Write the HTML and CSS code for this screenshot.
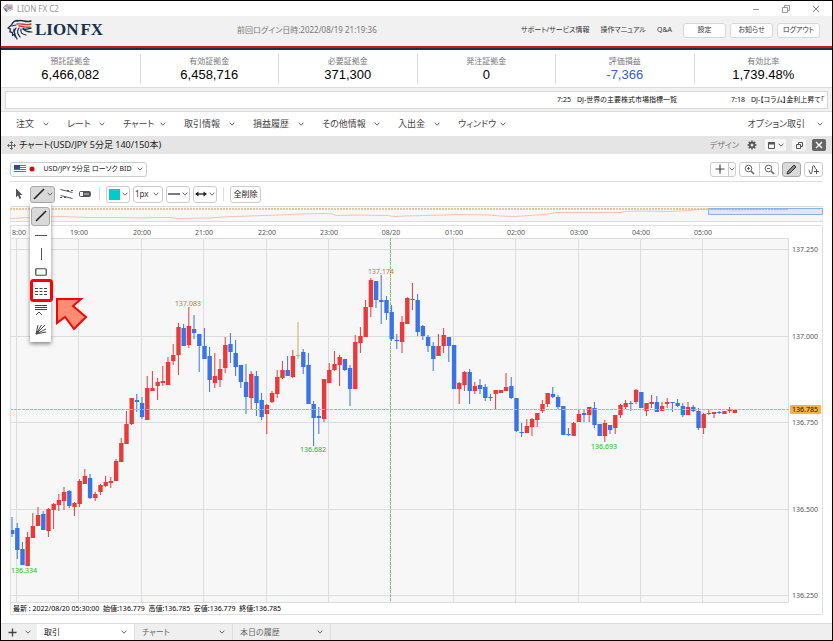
FILE: index.html
```html
<!DOCTYPE html>
<html lang="ja">
<head>
<meta charset="utf-8">
<title>LION FX C2</title>
<link rel="stylesheet" href="styles.css">
</head>
<body>
<svg class="defs" aria-hidden="true">
  <symbol id="chev" viewBox="0 0 6 4"><path d="M.7.7 3 3.2 5.3.7" fill="none" stroke="#666" stroke-width="1"/></symbol>
  <symbol id="lion" viewBox="0 0 26 22">
    <g fill="none" stroke="#16304d" stroke-linecap="round" stroke-linejoin="round">
      <path stroke-width="1.3" d="M11 1.500C7 1.500 5.500 3.500 4.500 6L1 9l2.500 1.200-.7 2.600 2.700.7v3l2-1.500.8 3"/>
      <path stroke-width="1.2" d="M5 7l4-1M9 9c-3 4-1 7 1 11M12 9c-3 4-1 6 1 9M14 10c-1 4 1 5 5 6M16 9c1 3 4 4 9 4M7 10c-1 2 0 3 1 5"/>
    </g>
    <g fill="none" stroke-linecap="round" stroke-width="1.400">
      <path stroke="#16304d" d="M10 2c6-2 8 2 14 0M16 10c3 1 5 0 8-1"/>
      <path stroke="#e3342f" d="M10 5c6-1 8 2 14 0M12 7c4 0 6 2 11 1"/>
    </g>
  </symbol>
</svg>

<div class="titlebar">
  <svg class="app-icon" viewBox="0 0 26 22"><use href="#lion"/></svg>
  <span>LION FX C2</span>
  <div class="window-buttons">
    <button aria-label="最小化"><svg width="8" height="8"><path d="M1 4.500h6" stroke="#999"/></svg></button>
    <button aria-label="元に戻す"><svg width="8" height="8" fill="none" stroke="#999"><path d="M.5 2.500h5v5h-5zM2.500 2.500v-2h5v5h-2"/></svg></button>
    <button aria-label="閉じる"><svg width="8" height="8"><path d="M1 1l6 6M7 1 1 7" stroke="#888"/></svg></button>
  </div>
</div>

<header class="header">
  <div class="brand"><svg class="lion" viewBox="0 0 26 22"><use href="#lion"/></svg><span>LION</span><span>FX</span></div>
  <div class="login">前回ログイン日時:2022/08/19 21:19:36</div>
  <nav class="links">
    <a href="#">サポート/サービス情報</a><a href="#">操作マニュアル</a><a href="#">Q&amp;A</a>
    <div class="header-buttons"><button>設定</button><button>お知らせ</button><button>ログアウト</button></div>
  </nav>
</header>

<dl class="stats">
  <div><dt>預託証拠金</dt><dd>6,466,082</dd></div>
  <div><dt>有効証拠金</dt><dd>6,458,716</dd></div>
  <div><dt>必要証拠金</dt><dd>371,300</dd></div>
  <div><dt>発注証拠金</dt><dd>0</dd></div>
  <div><dt>評価損益</dt><dd class="minus">-7,366</dd></div>
  <div><dt>有効比率</dt><dd>1,739.48%</dd></div>
</dl>

<div class="ticker"><div class="ticker-box"><div class="ticker-items">
  <span><time>7:25</time>DJ-世界の主要株式市場指標一覧</span>
  <span><time>7:18</time>DJ-【コラム】金利上昇て「</span>
</div></div></div>

<nav class="menu">
  <button>注文<svg class="chev"><use href="#chev"/></svg></button>
  <button>レート<svg class="chev"><use href="#chev"/></svg></button>
  <button>チャート<svg class="chev"><use href="#chev"/></svg></button>
  <button>取引情報<svg class="chev"><use href="#chev"/></svg></button>
  <button>損益履歴<svg class="chev"><use href="#chev"/></svg></button>
  <button>その他情報<svg class="chev"><use href="#chev"/></svg></button>
  <button>入出金<svg class="chev"><use href="#chev"/></svg></button>
  <button>ウィンドウ<svg class="chev"><use href="#chev"/></svg></button>
  <button class="option">オプション取引<svg class="chev"><use href="#chev"/></svg></button>
</nav>

<div class="panel-title">
  <svg width="9" height="9" fill="none" stroke="#666"><path d="M4.500 1v7M1 4.500h7M3 2l1.500-1.500L6 2M3 7l1.500 1.500L6 7M2 3 .5 4.500 2 6M7 3l1.500 1.500L7 6"/></svg>
  <h1>チャート(USD/JPY 5分足 140/150本)</h1>
  <div class="panel-tools">
    <span>デザイン</span>
    <button class="gear" aria-label="設定"><svg width="10" height="10" fill="none" stroke="#555"><circle cx="5" cy="5" r="2.400" stroke-width="1.800"/><path stroke-width="1.500" d="M5 .5v1.500M5 8v1.500M.5 5H2M8 5h1.500M1.800 1.800l1.100 1.100M7.100 7.100l1.100 1.100M8.200 1.800 7.100 2.900M2.900 7.100 1.800 8.200"/></svg></button>
    <button class="wide" aria-label="レイアウト"><svg width="7" height="7" fill="none" stroke="#555"><path d="M.5.5h6v6h-6z"/><path d="M0 1.500h7" stroke-width="2"/></svg><svg class="chev"><use href="#chev"/></svg></button>
    <button aria-label="切り離す"><svg width="7" height="7" fill="none" stroke="#555"><path d="M.5 2.500h4v4h-4zM2.500 2.500v-2h4v4h-2"/></svg></button>
    <button class="close" aria-label="閉じる"><svg width="8" height="8"><path d="M1 1l6 6M7 1 1 7" stroke="#fff" stroke-width="1.500"/></svg></button>
  </div>
</div>

<main class="workspace">
  <div class="toolbar symbol-bar">
    <button class="symbol">
      <svg width="24" height="10"><path fill="#fff" d="M0 1h24v8H0z"/><path d="M0 1.500h12M0 3.500h12M0 5.500h12M0 7.500h12" stroke="#e8404a"/><path fill="#2a4aa0" d="M0 1h6v4H0z"/><circle cx="18" cy="5" r="2.500" fill="#e00010"/></svg>
      USD/JPY 5分足 ローソク BID <svg class="chev"><use href="#chev"/></svg></button>
    <div class="group right">
      <div class="joined">
        <button class="w18" aria-label="十字"><svg width="10" height="10"><path d="M5 .5v9M.5 5h9" stroke="#444" stroke-width="1.200"/></svg></button><button class="w7" aria-label="十字の種類"><svg class="chev"><use href="#chev"/></svg></button>
      </div>
      <div class="joined">
        <button class="w20" aria-label="拡大"><svg width="11" height="11" fill="none" stroke="#666"><circle cx="4.500" cy="4.500" r="3.300"/><path d="M3 4.500h3M4.500 3v3"/><path stroke-width="1.600" d="M7 7l3 3"/></svg></button><button class="w20" aria-label="縮小"><svg width="11" height="11" fill="none" stroke="#666"><circle cx="4.500" cy="4.500" r="3.300"/><path d="M3 4.500h3"/><path stroke-width="1.600" d="M7 7l3 3"/></svg></button>
      </div>
      <button class="box w20 on" aria-label="描画"><svg width="11" height="11"><path d="M1 10l.8-2.800L8 1l2 2-6.200 6.200z" fill="#888" stroke="#333"/></svg></button>
      <button class="box w20" aria-label="指標"><svg width="12" height="11" fill="none" stroke="#555"><path d="M.5 6C2 6 1.500 10 3 10S4 1.500 5.500 1.500 6.500 5 8 5M8.500 5v5M6 7.500h5"/></svg></button>
    </div>
  </div>

  <div class="toolbar draw-bar">
    <button class="plain" aria-label="選択"><svg width="10" height="12"><path d="M2 .5v9l2-2 1.500 3.500 1.800-.8L5.700 7H8.500z" fill="#555"/></svg></button>
    <div class="line-tool">
      <button class="box on w25" aria-label="ライン"><svg width="12" height="12"><path d="M1 11 11 1" stroke="#222" stroke-width="1.600"/></svg><svg class="chev"><use href="#chev"/></svg></button>
      <div class="palette">
        <button class="picked" aria-label="トレンドライン"><svg width="12" height="12"><path d="M1 11 11 1" stroke="#222" stroke-width="1.600"/></svg></button>
        <button aria-label="水平線"><svg width="12" height="12"><path d="M0 6.500h12" stroke="#555"/></svg></button>
        <button aria-label="垂直線"><svg width="12" height="12"><path d="M6.500 0v12" stroke="#555"/></svg></button>
        <button aria-label="四角形"><svg width="12" height="12"><rect x=".75" y="1.750" width="10.500" height="6.500" rx="1" fill="none" stroke="#444" stroke-width="1.200"/></svg></button>
        <button aria-label="フィボナッチ"><svg width="12" height="12"><path d="M0 2.500h12M0 5.500h12M0 8.500h12" stroke="#444" stroke-dasharray="3 1.500"/></svg></button>
        <button aria-label="リトレースメント"><svg width="12" height="12" fill="none" stroke="#444"><path d="M0 .5h12M0 2.500h12M0 4.500h12M1 10l3-3 3 3"/></svg></button>
        <button aria-label="ファン"><svg width="12" height="12" fill="none" stroke="#444"><path d="M1 10 3 1M1 10 6.500 1M1 10l9-9M1 10l10-5M1 10l10-2"/></svg></button>
        <svg class="callout" width="60" height="54"><rect x="2.500" y="2.500" width="20" height="20" rx="2" fill="none" stroke="#f00" stroke-width="3"/><path d="M28 21h24l-8 7 13 11-12 12-9-12-8 6z" fill="#ff8d74" stroke="#f00" stroke-width="2"/></svg>
      </div>
    </div>
    <button class="plain" aria-label="チャネル"><svg width="13" height="12" fill="none" stroke="#555"><path d="M.5 1.500l12 3M.5 7.500l12 3"/><path stroke-dasharray="2 2" d="M7 2.500h6M0 9.500h7"/></svg></button>
    <button class="plain" aria-label="テキスト"><svg width="12" height="8"><rect x=".5" y="1.500" width="11" height="5" rx="1" fill="#fff" stroke="#555"/><path fill="#555" d="M4 2h7v4H4z"/><path stroke="#ccc" d="M5 4h5"/></svg></button>
    <i class="rule"></i>
    <button class="box w24" aria-label="色"><b class="swatch"></b><svg class="chev"><use href="#chev"/></svg></button>
    <label class="px"><select aria-label="線の太さ"><option>1px</option><option>2px</option></select><svg class="chev"><use href="#chev"/></svg></label>
    <button class="box w24" aria-label="線種"><svg width="12" height="8"><path d="M0 4h12" stroke="#333" stroke-width="1.300"/></svg><svg class="chev"><use href="#chev"/></svg></button>
    <button class="box w24" aria-label="延長"><svg width="12" height="8"><path d="M1 4h10" stroke="#222" stroke-width="1.300"/><path fill="#222" d="M0 4l3.500-2.500v5zM12 4 8.500 1.500v5z"/></svg><svg class="chev"><use href="#chev"/></svg></button>
    <i class="rule"></i>
    <button class="box delete">全削除</button>
  </div>

  <svg class="overview" viewBox="10 206 813 17">
    <path class="ov-bg" d="M10 206.500h813v15H10z"/>
    <path class="ov-line" d="M10 218.500 20 218 32 217.500 45 217 60 216.500 75 217 90 217.500 120 217.500 140 218 155 217.500 170 217.500 178 218.500 210 218 222 217 235 216.500 250 216 262 215.500 280 215 290 214.500 300 214 325 213.500 332 214 336 215.500 355 215 387 215.500 395 216.500 405 216 425 215.500 445 215 455 214.500 490 215 500 216 515 216.500 530 215.500 545 214.500 556 212.500 620 212.500 624 211.500 640 211 670 211.500 688 210.500 700 209.500 725 209.500 735 210 760 209.500 766 208.500 775 209.500 788 209.500"/>
    <path class="ov-range" d="M708.500 208.500h114v6h-114z"/>
    <path class="ov-now" d="M10 209h698"/>
    <path class="ov-now thin" d="M708 209.500h80"/>
  </svg>

  <section class="chart">
    <svg id="plot" viewBox="11 226 811 377" role="img" aria-label="USD/JPY 5分足"></svg>
    <p>最新 : 2022/08/20 05:30:00&nbsp; 始値:136.779&nbsp; 高値:136.785&nbsp; 安値:136.779&nbsp; 終値:136.785</p>
  </section>
</main>

<footer class="tabs">
  <button class="add" aria-label="追加"><svg width="9" height="9"><path d="M4.500.5v8M.5 4.500h8" stroke="#444" stroke-width="1.300"/></svg><svg class="chev"><use href="#chev"/></svg></button>
  <button class="tab current">取引<svg class="chev"><use href="#chev"/></svg></button>
  <button class="tab">チャート<svg class="chev"><use href="#chev"/></svg></button>
  <button class="tab">本日の履歴<svg class="chev"><use href="#chev"/></svg></button>
</footer>
<script src="chart.js"></script>
</body>
</html>
```
FILE: styles.css
```css
* { box-sizing: border-box; }
body {
  margin: 0; min-height: 100vh; display: flex; flex-direction: column;
  border: 1px solid #000; background: #fff; color: #333; overflow-x: hidden;
  font: 8px/12px "Noto Sans", "Noto Sans CJK JP", sans-serif;
  font-feature-settings: "palt";
}
button, select { font: inherit; font-feature-settings: inherit; color: inherit; padding: 0; margin: 0; border: 0; background: none; }
button { display: flex; align-items: center; justify-content: center; white-space: nowrap; }
a { color: inherit; text-decoration: none; }
svg { display: block; flex: none; }
.defs { position: absolute; width: 0; height: 0; }
.chev { width: 6px; height: 4px; }

.titlebar { display: flex; align-items: center; height: 15px; padding: 0 12px 0 2px; gap: 4px; color: #999; }
.app-icon { width: 10px; height: 9px; }
.window-buttons { display: flex; gap: 22px; margin-left: auto; }

.header { display: grid; grid-template-columns: 236px 1fr auto; align-items: center; height: 34px; background: #f1f1f1; padding: 0 12px 4px 0; border-bottom: 2px solid #16304d; box-shadow: inset 0 -2px #d5121d; }
.brand { display: flex; align-items: center; gap: 2px; padding-left: 6px; font: bold 17px/20px "Liberation Serif", serif; color: #16304d; }
.lion { width: 26px; height: 22px; }
.login { color: #777; }
.links { display: flex; align-items: center; gap: 11px; white-space: nowrap; font-size: 7px; }
.header-buttons { display: flex; gap: 4px; }
.header-buttons button { width: 43px; height: 15px; background: #fff; border: 1px solid #d8d8d8; border-radius: 3px; }

.stats { display: grid; grid-template-columns: repeat(6, 1fr); margin: 0; padding: 4px 0 3px; height: 37px; text-align: center; }
.stats div + div { border-left: 1px solid #ddd; }
.stats dt { color: #777; line-height: 13px; }
.stats dd { margin: 0; font: 13px/16px "Liberation Sans", sans-serif; color: #000; }
.stats .minus { color: #2f5fd0; }

.ticker { padding: 3px 4px 2px; background: #f2f2f2; border-top: 1px solid #ddd; border-bottom: 1px solid #ddd; }
.ticker-box { height: 18px; border: 1px solid #d8d8d8; background: #fff; overflow: hidden; }
.ticker-items { display: flex; width: 270px; height: 16px; align-items: center; margin-left: auto; white-space: nowrap; color: #111; font-size: 7px; }
.ticker-items span { flex: 0 0 174px; }
.ticker-items time { margin-right: 6px; }

.menu { display: grid; grid-template-columns: 51px 56px 61px 69px 69px 76px 60px 66px 1fr; height: 24px; padding-left: 15px; font-size: 9px; color: #444; }
.menu button { justify-content: space-between; padding-right: 18px; }
.menu .option { justify-content: flex-end; gap: 12px; padding-right: 9px; }

.panel-title { display: flex; align-items: center; gap: 3px; height: 18px; padding: 0 6px; background: #e5e5e5; }
.panel-title h1 { margin: 0; font-size: 9px; font-weight: 400; color: #222; }
.panel-tools { display: flex; align-items: center; gap: 6px; margin-left: auto; color: #777; }
.panel-tools button { width: 14px; height: 12px; gap: 3px; background: #f6f6f6; border-radius: 2px; }
.panel-tools .gear { background: none; }
.panel-tools .wide { width: 21px; }
.panel-tools .close { background: #666; }

.workspace { padding: 0 9px; }
.toolbar { display: flex; align-items: center; }
.symbol-bar { height: 28px; padding-top: 3px; border-bottom: 1px solid #ddd; }
.symbol, .box, .joined, .px { height: 15px; border: 1px solid #ccc; border-radius: 3px; background: #fff; }
.symbol { width: 137px; gap: 5px; color: #222; font-size: 7px; }
.group { display: flex; gap: 3px; }
.right { margin-left: auto; }
.joined { display: flex; }
.joined button + button { border-left: 1px solid #ccc; }
.w7 { width: 7px; }
.w18 { width: 17px; }
.w20 { width: 19px; }
.w24 { width: 24px; gap: 2px; }
.w25 { width: 25px; gap: 2px; }
.box.on { background: #d9d9d9; border-color: #aaa; }
.draw-bar { height: 24px; gap: 3px; padding-left: 1px; }
.draw-bar .box, .px { height: 17px; }
.plain { width: 16px; height: 16px; }
.rule { width: 1px; height: 14px; margin: 0 3px; background: #ddd; }
.swatch { width: 11px; height: 11px; background: #00cbcb; }
.px { display: flex; align-items: center; width: 30px; }
.px select { width: 19px; height: 14px; padding-left: 1px; appearance: none; }
.delete { width: 31px; color: #222; }

.line-tool { position: relative; z-index: 2; }
.palette { position: absolute; left: 0; top: 17px; width: 21px; padding: 4px 1px 2px; background: #fff; box-shadow: 0 2px 4px #888; }
.palette button { width: 19px; height: 19px; }
.palette .picked { background: #d9d9d9; border: 1px solid #aaa; border-radius: 3px; }
.callout { position: absolute; left: -1px; top: 75px; }

.overview { width: 100%; margin-bottom: 2px; }
.ov-bg { fill: #f7f7f7; stroke: #ddd; }
.ov-line { fill: none; stroke: #f8c0bc; }
.ov-range { fill: #a8b4ff44; stroke: #8fb0e0; }
.ov-now { stroke: #f4b860; stroke-width: 1.5; stroke-dasharray: 2 1; }
.ov-now.thin { stroke: #e8a0a0; stroke-width: 1; }

.chart { border: 1px solid #e0e0e0; }
.chart > svg { width: 100%; height: auto; }
.chart p { margin: 0; font-size: 7px; line-height: 11px; color: #000; padding-left: 2px; }
.plot-bg { fill: #f7f7f7; stroke: #ddd; }
.grid { stroke: #ddd; }
.tick { font-size: 7px; fill: #555; }
.time { text-anchor: middle; }
.up { fill: #e83a3a; }
.down { fill: #3a73e8; }
.flat { fill: #c8b060; }
.high, .low { font-size: 7px; text-anchor: middle; fill: #f06a10; }
.low { fill: #10c010; }
.midnight { stroke: #80d070; stroke-dasharray: 3 1; }
.now { stroke: #f8a840; stroke-dasharray: 3 1; }
.now-tag { fill: #fbb040; }
.now-text { font-size: 7px; fill: #111; }

.tabs { display: flex; height: 17px; margin-top: auto; background: #efefef; border-top: 1px solid #ddd; color: #666; }
.add { width: 36px; gap: 8px; }
.tab { width: 98px; justify-content: space-between; padding: 0 7px; border-right: 1px solid #ddd; }
.current { background: #fff; color: #111; }
```
FILE: chart.js
```js
// One entry per 5-minute candle: colour (u/d/n), body top, body bottom, wick top, wick bottom.
const candles = `d530,534,517,537 d528,550,523,559 d549,565,542,565 u537,566,532,566 u526,538,513,538 u515,526,507,526
d514,530,511,530 u509,531,508,537 u504,510,503,529 u500,505,494,511 u492,501,487,510 d491,506,490,508
u503,507,502,516 u481,504,479,507 u476,484,469,484 d478,498,474,499 u494,498,492,501 u485,492,484,495
u482,486,476,487 u481,483,477,488 u461,481,459,481 u443,462,438,462 u424,444,411,444 u398,424,398,425
d400,402,394,412 d403,417,397,419 u388,420,376,420 u388,391,371,391 u382,386,378,400 u381,383,366,386
u362,385,357,385 u355,361,344,365 u327,355,323,375 d328,346,324,346 u326,345,307,348 d329,333,315,339
d334,346,334,372 d346,359,328,359 d356,380,347,392 u376,383,353,388 u369,380,359,387 u345,368,337,373
d344,352,333,363 d353,367,340,376 d365,382,365,388 d382,397,364,414 u374,398,371,409 d376,403,371,416
d400,417,393,420 u405,414,404,434 u393,402,391,403 u377,394,370,398 u370,378,361,379 d370,376,356,376
u356,377,350,378 n355,356,322,359 d352,367,349,374 d365,404,353,404 d404,418,401,446 d416,418,407,434
u379,419,379,422 u370,383,363,383 u364,370,351,371 u357,365,355,386 d359,370,359,371 d368,389,365,406
u342,389,335,389 u336,343,327,353 u307,337,300,337 u280,307,278,317 d281,300,281,308 d300,302,275,324
d300,313,296,320 d312,339,305,341 d340,341,334,349 u322,342,316,353 u298,324,297,324 u299,300,283,310
d300,332,294,336 d326,336,325,340 d337,346,335,352 d346,359,342,371 u346,356,334,356 u335,346,328,353
d337,346,337,362 d345,389,345,389 u383,389,382,404 u372,385,371,391 d372,391,369,404 u386,391,382,394
d385,389,379,394 d387,398,384,401 d397,398,394,401 u390,394,390,410 u390,393,390,393 u387,391,373,391
d386,398,377,399 d398,431,398,432 d432,433,423,437 u426,433,419,433 u419,427,418,436 u413,420,413,427
u404,411,400,413 u393,404,393,407 d394,397,387,398 d397,407,395,409 d406,435,406,435 d434,435,428,436
u423,436,422,436 u414,422,410,422 d413,415,409,422 u407,415,407,422 d408,425,402,428 d424,436,424,436
u423,436,420,442 d425,430,425,434 u415,428,415,434 u405,415,404,418 u403,407,400,409 d403,404,401,411
u390,402,389,404 d392,408,392,408 u403,411,403,416 u402,404,395,408 d402,412,396,412 u406,411,402,411
u402,404,398,408 d402,403,402,412 d403,406,399,407 d406,415,403,417 u407,415,402,415 d407,411,405,412
d411,428,408,430 u414,428,413,434 u413,414,409,415 u412,414,412,418 d412,413,411,414 u411,414,411,414
u410,411,407,413 u410,413,410,413`.split(/\s+/);

const first = 12, step = 5.2;
const names = { u: 'up', d: 'down', n: 'flat' };
const svg = [];

svg.push('<path class="plot-bg" d="M9.500 238.500h779v364h-779z"/>');
for (const y of [249, 336, 422, 509, 595]) svg.push(`<path class="grid" d="M10 ${y}.500H788"/>`);
const times = ['18:00', '19:00', '20:00', '21:00', '22:00', '23:00', '08/20', '01:00', '02:00', '03:00', '04:00', '05:00'];
times.forEach((t, i) => {
  const x = Math.round(17 + i * step * 12);
  const kind = t === '08/20' ? 'midnight' : 'grid';
  svg.push(`<path class="${kind}" d="M${x - 0.5} 238V602"/><text class="tick time" x="${x}" y="235">${t}</text>`);
});

candles.forEach((c, i) => {
  const [top, bottom, high, low] = c.slice(1).split(',').map(Number);
  const x = first + i * step;
  svg.push(`<g class="${names[c[0]]}"><rect x="${(x - 0.5).toFixed(1)}" y="${high}" width="1" height="${low - high}"/>` +
    `<rect x="${(x - 2.1).toFixed(1)}" y="${top}" width="4.400" height="${Math.max(1, bottom - top)}"/></g>`);
});

svg.push('<path class="now" d="M10 409.500H790"/><rect class="now-tag" x="790" y="405" width="31" height="9" rx="1"/>');
svg.push('<text class="now-text" x="792" y="412">136.785</text>');
[['137.250', 249], ['137.000', 336], ['136.750', 422], ['136.500', 509], ['136.250', 595]]
  .forEach(([t, y]) => svg.push(`<text class="tick" x="792" y="${y + 3}">${t}</text>`));
[['high', '137.083', 188, 306], ['high', '137.174', 381, 274], ['low', '136.334', 24, 573], ['low', '136.682', 313, 452], ['low', '136.693', 604, 449]]
  .forEach(([k, t, x, y]) => svg.push(`<text class="${k}" x="${x}" y="${y}">${t}</text>`));

document.getElementById('plot').innerHTML = svg.join('');
```
